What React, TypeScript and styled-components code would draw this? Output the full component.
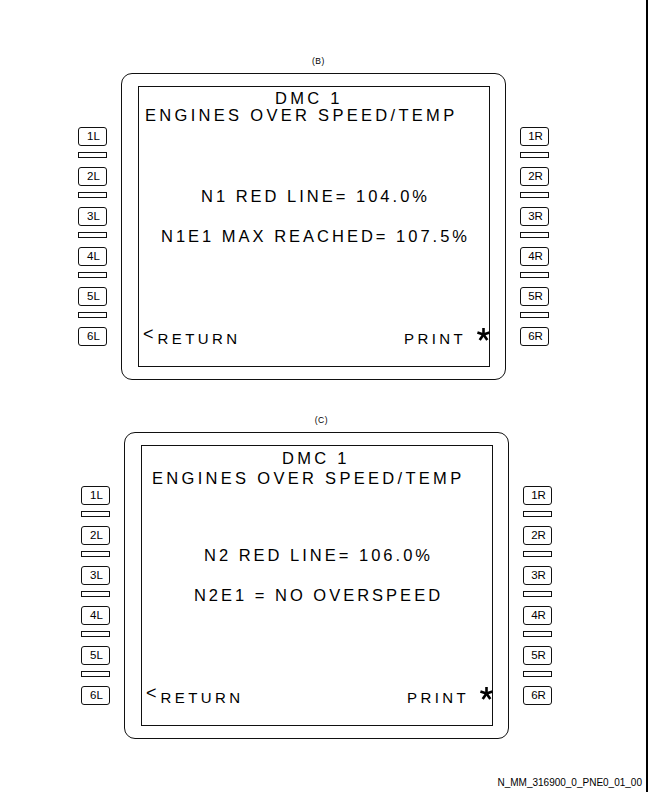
import React from "react";
import styled, { createGlobalStyle } from "styled-components";

interface PanelData {
  label: string;
  offset: number;
  top: number;
  indent: number;
  headTop: number;
  titleGap: number;
  lines: string[];
}

const panels: PanelData[] = [
  {
    label: "(B)",
    offset: 78,
    top: 0,
    indent: 6,
    headTop: 3,
    titleGap: 0,
    lines: ["N1 RED LINE= 104.0%", "N1E1 MAX REACHED= 107.5%"],
  },
  {
    label: "(C)",
    offset: 81,
    top: 35,
    indent: 10,
    headTop: 4,
    titleGap: 3,
    lines: ["N2 RED LINE= 106.0%", "N2E1 = NO OVERSPEED"],
  },
];

const keyRows = ["1", "2", "3", "4", "5", "6"];

const GlobalStyle = createGlobalStyle`
  html, body {
    margin: 0;
    padding: 0;
    background: #ffffff;
  }
  body {
    font-family: "Liberation Sans", Arial, sans-serif;
    color: #000000;
  }
`;

const Page = styled.div`
  width: 648px;
  height: 792px;
  box-sizing: border-box;
  border-right: 2px solid #000;
  padding-top: 56px;
  display: flex;
  flex-direction: column;
  overflow: hidden;
`;

const Figure = styled.section<{ $offset: number; $top: number }>`
  display: flex;
  flex-direction: column;
  align-self: flex-start;
  margin-left: ${(p) => p.$offset}px;
  margin-top: ${(p) => p.$top}px;
`;

const Caption = styled.div`
  font-size: 8.5px;
  line-height: 10px;
  letter-spacing: 0.6px;
  text-align: center;
  padding-left: 10px;
  margin-bottom: 7px;
`;

const Row = styled.div`
  display: flex;
  align-items: flex-start;
  gap: 14px;
`;

const KeyColumn = styled.div`
  display: flex;
  flex-direction: column;
  padding-top: 54px;
`;

const Key = styled.div`
  width: 29px;
  height: 19px;
  box-sizing: border-box;
  border: 1px solid #111;
  border-radius: 3px;
  display: flex;
  align-items: center;
  justify-content: center;
  padding-left: 2px;
  font-size: 11.5px;
  line-height: 1;
`;

const Slot = styled.div`
  width: 29px;
  height: 6px;
  box-sizing: border-box;
  border: 1px solid #111;
  margin: 6px 0 9px;
`;

const Bezel = styled.div`
  width: 385px;
  height: 307px;
  box-sizing: border-box;
  border: 1px solid #111;
  border-radius: 11px;
  padding: 12px 15px 12px 16px;
`;

const Screen = styled.div`
  height: 281px;
  box-sizing: border-box;
  border: 1px solid #111;
  display: flex;
  flex-direction: column;
  white-space: nowrap;
`;

const Heading = styled.div<{ $indent: number; $top: number }>`
  height: 101px;
  box-sizing: border-box;
  padding: ${(p) => p.$top}px 0 0 ${(p) => p.$indent}px;
  font-size: 16.5px;
  line-height: 17px;
  letter-spacing: 3.3px;
`;

const TitleLine = styled.div<{ $gap: number }>`
  margin-left: 130px;
  margin-bottom: ${(p) => p.$gap}px;
`;

const DataLine = styled.div`
  font-size: 16.5px;
  line-height: 17px;
  letter-spacing: 3px;
  text-align: center;
  padding-left: 3px;
  margin-bottom: 23px;
`;

const BottomRow = styled.div`
  margin-top: auto;
  display: flex;
  justify-content: space-between;
  align-items: baseline;
  padding: 0 0 19px 4px;
  font-size: 15px;
  line-height: 16px;
  letter-spacing: 3.4px;
`;

const Arrow = styled.span`
  font-size: 18px;
  letter-spacing: 4px;
  vertical-align: 4px;
`;

const Star = styled.svg`
  width: 15px;
  height: 13px;
  margin-left: 10px;
  margin-right: -2px;
  vertical-align: 3px;
`;

const Footer = styled.div`
  margin-top: 38px;
  font-size: 10px;
  line-height: 12px;
  text-align: right;
  padding-right: 4px;
`;

function KeyStack({ side }: { side: string }) {
  return (
    <KeyColumn>
      {keyRows.map((n, i) => (
        <React.Fragment key={n}>
          <Key>{n + side}</Key>
          {i < keyRows.length - 1 && <Slot />}
        </React.Fragment>
      ))}
    </KeyColumn>
  );
}

function McduPanel({ panel }: { panel: PanelData }) {
  return (
    <Figure $offset={panel.offset} $top={panel.top}>
      <Caption>{panel.label}</Caption>
      <Row>
        <KeyStack side="L" />
        <Bezel>
          <Screen>
            <Heading $indent={panel.indent} $top={panel.headTop}>
              <TitleLine $gap={panel.titleGap}>DMC 1</TitleLine>
              <div>ENGINES OVER SPEED/TEMP</div>
            </Heading>
            {panel.lines.map((line) => (
              <DataLine key={line}>{line}</DataLine>
            ))}
            <BottomRow>
              <span>
                <Arrow>&lt;</Arrow>RETURN
              </span>
              <span>
                PRINT
                <Star viewBox="0 0 15 13">
                  <g stroke="#000" strokeWidth="2.6">
                    <line x1="7.5" y1="6.5" x2="7.5" y2="0" />
                    <line x1="7.5" y1="6.5" x2="13.6" y2="4.5" />
                    <line x1="7.5" y1="6.5" x2="11.3" y2="12" />
                    <line x1="7.5" y1="6.5" x2="3.7" y2="12" />
                    <line x1="7.5" y1="6.5" x2="1.4" y2="4.5" />
                  </g>
                </Star>
              </span>
            </BottomRow>
          </Screen>
        </Bezel>
        <KeyStack side="R" />
      </Row>
    </Figure>
  );
}

export default function App() {
  return (
    <>
      <GlobalStyle />
      <Page>
        {panels.map((p) => (
          <McduPanel key={p.label} panel={p} />
        ))}
        <Footer>N_MM_316900_0_PNE0_01_00</Footer>
      </Page>
    </>
  );
}
